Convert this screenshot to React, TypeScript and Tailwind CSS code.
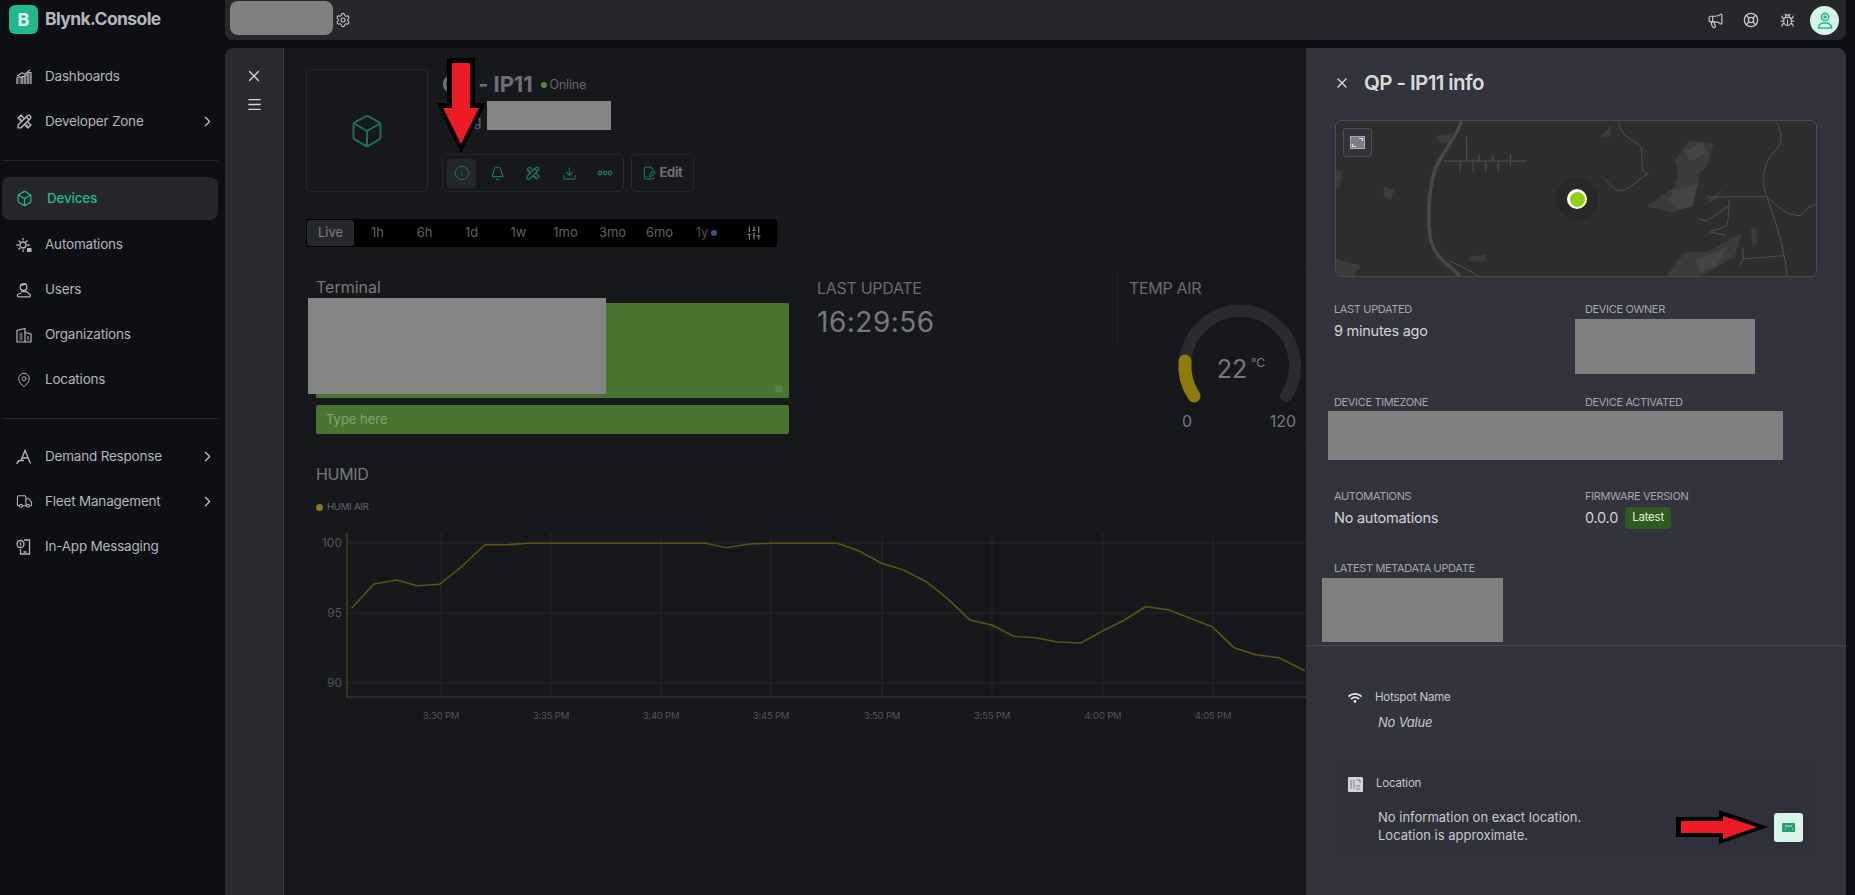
import React from "react";
import {
  Box, Bell, Download, Info, Menu, X, ChevronRight, Settings, Megaphone, LifeBuoy, Bug,
  SlidersVertical, MapPin, Truck, FilePenLine,
} from "lucide-react";
import { TbTools } from "react-icons/tb";
import { FaWifi } from "react-icons/fa";

function DashIcon() {
  return (
    <svg width="16" height="16" viewBox="0 0 16 16" fill="none" stroke="currentColor" strokeWidth="1.2">
      <path d="M1 15V9l2.500-1.500L6 9v6M6 15V7.500h3V15M9 15V6h3v9M12 15V3.500h3V15" fill="currentColor" fillOpacity=".35" />
      <path d="M1 7l5-3 3 1 5-4" />
    </svg>
  );
}
function AutoIcon() {
  return (
    <svg width="16" height="16" viewBox="0 0 16 16" fill="none" stroke="currentColor" strokeWidth="1.3">
      <circle cx="7" cy="8" r="3" />
      <path d="M7 1v2.500M7 12.500V15M0.500 8H3M11 8h2.500M2.500 3.500l1.800 1.800M11.500 3.500L9.700 5.300M2.500 12.500l1.800-1.800" />
      <rect x="11" y="11" width="4.500" height="4" fill="currentColor" stroke="none" />
    </svg>
  );
}
function UsersIcon() {
  return (
    <svg width="16" height="16" viewBox="0 0 16 16" fill="none" stroke="currentColor" strokeWidth="1.3">
      <circle cx="7.500" cy="5" r="3.300" />
      <path d="M4 3.500l6-1.500M5 9.500h5l3.500 2.500c1.500 1 1 2.800-.5 2.800H3C1 14.800.8 12.500 2.500 12l3-1" />
    </svg>
  );
}
function OrgIcon() {
  return (
    <svg width="16" height="16" viewBox="0 0 16 16" fill="none" stroke="currentColor" strokeWidth="1.2">
      <path d="M1 15V3.500L9 1.500V15M9 5.500l6 1.500v8M0.500 15h15" />
      <path d="M3.500 5.500h3v8h-3zM11 9h2v4.500h-2z" fill="currentColor" fillOpacity=".5" stroke="none" />
    </svg>
  );
}
function DemandIcon() {
  return (
    <svg width="16" height="16" viewBox="0 0 16 16" fill="none" stroke="currentColor" strokeWidth="1.3">
      <path d="M5 11.500L9 1.500l5.500 13M6.700 9h5.500M1 15c0-2 1-3 3-3.500h4" />
    </svg>
  );
}
function AppIcon() {
  return (
    <svg width="16" height="16" viewBox="0 0 16 16" fill="none" stroke="currentColor" strokeWidth="1.3">
      <path d="M8 1h5.500v14h-9V10" />
      <circle cx="4.500" cy="5" r="3.500" />
      <path d="M4.500 3.500v3M7.500 13h3" />
    </svg>
  );
}
function DotsIcon() {
  return (
    <svg width="16" height="8" viewBox="0 0 16 8" fill="none" stroke="currentColor" strokeWidth="1.400">
      <circle cx="3" cy="4" r="1.700" />
      <circle cx="8" cy="4" r="1.700" />
      <circle cx="13" cy="4" r="1.700" />
    </svg>
  );
}

function NavItem({ icon, label, arrow, className = "" }: { icon: React.ReactNode; label: string; arrow?: boolean; className?: string }) {
  return (
    <div className={`flex h-[45px] items-center pl-[16px] pr-[9px] text-[13.5px] tracking-[-0.2px] text-[#b4b5b9] ${className}`}>
      <span className="flex w-[29px] text-[#b4b5b9]">{icon}</span>
      <span className="flex-1">{label}</span>
      {arrow && <ChevronRight size={17} strokeWidth={1.6} className="text-[#c9cacc]" />}
    </div>
  );
}

function Sidebar() {
  return (
    <aside className="flex w-[225px] shrink-0 flex-col">
      <div className="flex h-[37px] items-center gap-[7px] pl-[9px] pt-[1px]">
        <div className="flex h-[29px] w-[29px] items-center justify-center rounded-[6px] bg-[#21b88a] text-[18px] font-bold text-[#e8faf3]">B</div>
        <span className="text-[17.5px] font-bold tracking-[-0.6px] text-[#b5b6ba]">Blynk.Console</span>
      </div>
      <div className="mt-[17px]">
        <NavItem icon={<DashIcon />} label="Dashboards" />
        <NavItem icon={<TbTools size={17} />} label="Developer Zone" arrow />
      </div>
      <div className="mx-[2px] mt-[16px] w-[216px] border-t border-[#26272b]" />
      <div className="mx-[2px] mt-[16px] flex h-[43px] w-[216px] items-center rounded-[8px] bg-[#26272b] pl-[14px] text-[13.5px] font-medium tracking-[-0.2px] text-[#22b98a]">
        <Box size={17} strokeWidth={1.7} className="mr-[14px]" />
        Devices
      </div>
      <div className="mt-[2px]">
        <NavItem icon={<AutoIcon />} label="Automations" />
        <NavItem icon={<UsersIcon />} label="Users" />
        <NavItem icon={<OrgIcon />} label="Organizations" />
        <NavItem icon={<MapPin size={16} strokeWidth={1.4} />} label="Locations" />
      </div>
      <div className="mx-[2px] mt-[16px] w-[216px] border-t border-[#26272b]" />
      <div className="mt-[15px]">
        <NavItem icon={<DemandIcon />} label="Demand Response" arrow />
        <NavItem icon={<Truck size={17} strokeWidth={1.5} />} label="Fleet Management" arrow />
        <NavItem icon={<AppIcon />} label="In-App Messaging" />
      </div>
    </aside>
  );
}

function TopBar() {
  return (
    <header className="flex h-[40px] shrink-0 items-center rounded-b-[8px] bg-[#26272b] pl-[5px] pr-[7px]">
      <div className="mb-[4px] h-[34px] w-[103px] rounded-[8px] bg-[#808080]" />
      <Settings size={16} strokeWidth={1.6} className="ml-[2px] text-[#c4c5c8]" />
      <div className="ml-auto flex items-center text-[#c6c7ca]">
        <Megaphone size={17} strokeWidth={1.7} />
        <LifeBuoy size={16} strokeWidth={2} className="ml-[19px]" />
        <Bug size={15} strokeWidth={1.7} className="ml-[21px]" />
        <div className="ml-[15px] flex h-[29px] w-[29px] items-center justify-center rounded-full bg-[#d9f5ea]">
          <svg width="16" height="18" viewBox="0 0 16 18" fill="none" stroke="#25b98a" strokeWidth="1.600">
            <circle cx="8" cy="6" r="3.600" />
            <circle cx="8" cy="6" r="1" fill="#25b98a" />
            <path d="M1.500 17c0-3.500 2-5 6.500-5s6.500 1.500 6.500 5z" />
          </svg>
        </div>
      </div>
    </header>
  );
}

const ranges = ["1h", "6h", "1d", "1w", "1mo", "3mo", "6mo"];

function DeviceHeader() {
  return (
    <div className="flex h-[123px] gap-[14px]">
      <div className="flex h-[123px] w-[122px] items-center justify-center rounded-[4px] border border-[#26272b] text-[#1a7259]">
        <Box size={36} strokeWidth={1.3} />
      </div>
      <div className="flex flex-col">
        <div className="flex h-[30px] items-center">
          <span className="text-[22px] font-bold leading-none tracking-[-0.1px] text-[#6f7074]">QP - IP11</span>
          <span className="ml-[8px] mt-[2px] h-[6px] w-[6px] rounded-full bg-[#568a3a]" />
          <span className="ml-[3px] mt-[2px] text-[12.5px] tracking-[-0.2px] text-[#66676b]">Online</span>
        </div>
        <span className="ml-[17px] mt-[14px] text-[13px] leading-[16px] text-[#55658f] underline">Org</span>
        <div className="mt-auto flex gap-[7px]">
          <div className="flex h-[38px] w-[182px] items-center rounded-[5px] border border-[#26272b] pl-[4px] text-[#1a7259]">
            <div className="flex h-[29px] w-[29px] items-center justify-center rounded-[4px] bg-[#26272b]">
              <Info size={16} strokeWidth={1.5} />
            </div>
            <Bell size={15} strokeWidth={1.8} className="ml-[14px]" />
            <TbTools size={16} className="ml-[20px]" />
            <Download size={15} strokeWidth={1.8} className="ml-[21px]" />
            <span className="ml-[20px]"><DotsIcon /></span>
          </div>
          <div className="flex h-[38px] w-[63px] items-center justify-center gap-[3px] rounded-[5px] border border-[#26272b]">
            <FilePenLine size={14} strokeWidth={2} className="text-[#1a7259]" />
            <span className="text-[13px] font-bold tracking-[-0.3px] text-[#6f7074]">Edit</span>
          </div>
        </div>
      </div>
    </div>
  );
}

function TimeBar() {
  return (
    <div className="mt-[27px] flex h-[28px] w-[471px] items-center rounded-[3px] bg-black px-[1px] text-[13px] text-[#5f6064]">
      <div className="flex h-[26px] w-[47px] items-center justify-center rounded-[3px] bg-[#26272b] text-[#7b7c80]">Live</div>
      {ranges.map((r) => (
        <div key={r} className="flex w-[47px] justify-center">{r}</div>
      ))}
      <div className="flex w-[47px] items-center justify-center gap-[3px] text-[#4c4d51]">
        1y
        <span className="h-[6px] w-[6px] rounded-full bg-[#2f5694]" />
      </div>
      <SlidersVertical size={16} strokeWidth={2} className="ml-[16px] text-[#74757a]" />
    </div>
  );
}

function TerminalCard() {
  return (
    <div className="h-[180px] w-[489px] shrink-0 rounded-[4px] border border-[#1b1c20] px-[7px] pt-[11px]">
      <div className="text-[16px] leading-[20px] text-[#77787c]">Terminal</div>
      <div className="relative mt-[6px] h-[95px] rounded-[1px] bg-[#4a7530]">
        <span className="absolute bottom-[5px] right-[6px] h-[8px] w-[8px] rounded-full bg-[#5a8244]" />
      </div>
      <div className="mt-[7px] flex h-[29px] items-center rounded-[2px] bg-[#4a7530] pl-[10px] text-[13px] text-[#84a074]">Type here</div>
    </div>
  );
}

function LastUpdate() {
  return (
    <div className="ml-[8px] h-[87px] w-[308px] shrink-0 rounded-[4px] border border-[#1b1c20] px-[11px] pt-[12px]">
      <div className="text-[16px] leading-[20px] tracking-[-0.3px] text-[#6a6b6f]">LAST UPDATE</div>
      <div className="mt-[7px] text-[28px] leading-[34px] tracking-[0.5px] text-[#77787c]">16:29:56</div>
    </div>
  );
}

function Gauge() {
  return (
    <div className="ml-[4px] h-[180px] w-[300px] shrink-0 rounded-[4px] border border-[#1b1c20] px-[11px] pt-[12px]">
      <div className="text-[16px] leading-[20px] tracking-[-0.3px] text-[#6a6b6f]">TEMP AIR</div>
      <svg width="180" height="132" viewBox="1129 298 180 132" className="mt-[0px]">
        <path d="M1194 396 A55 55 0 1 1 1286 396" fill="none" stroke="#2a2b2f" strokeWidth="12" strokeLinecap="round" />
        <path d="M1194 396 A55 55 0 0 1 1185 361" fill="none" stroke="#8f7a0c" strokeWidth="13" strokeLinecap="round" />
        <text x="1232" y="378" textAnchor="middle" fontSize="25" fill="#77787c">22</text>
        <text x="1258" y="367" textAnchor="middle" fontSize="12" fill="#77787c">°C</text>
        <text x="1187" y="427" textAnchor="middle" fontSize="16" fill="#77787c">0</text>
        <text x="1283" y="427" textAnchor="middle" fontSize="16" fill="#77787c">120</text>
      </svg>
    </div>
  );
}

const raw: [number, number][] = [
  [80, 475], [115, 402], [150, 390], [182, 407], [217, 403], [252, 348], [287, 284], [320, 284], [355, 280], [630, 280], [662, 293], [697, 282], [732, 280], [835, 280], [868, 303], [903, 340], [937, 360], [972, 395], [1005, 445], [1040, 510], [1074, 525], [1108, 559], [1142, 563], [1176, 576], [1212, 579], [1246, 543], [1280, 510], [1313, 470], [1348, 479], [1382, 505], [1416, 530], [1450, 593], [1484, 614], [1520, 623], [1560, 662],
];
const pts = raw.map(([x, y]) => `${(300 + x / 1.5525).toFixed(1)},${(450 + y / 3).toFixed(1)}`).join(" ");
const gridX = [441, 551, 661, 771, 882, 992, 1103, 1213, 1323];
const times = ["3:30 PM", "3:35 PM", "3:40 PM", "3:45 PM", "3:50 PM", "3:55 PM", "4:00 PM", "4:05 PM"];

function Humid() {
  return (
    <div className="ml-[2px] mt-[10px] w-[1100px] px-[8px] pt-[9px]">
      <div className="text-[16px] leading-[20px] tracking-[-0.3px] text-[#77787c]">HUMID</div>
      <div className="mt-[15px] flex h-[16px] items-center gap-[4px] text-[9.5px] tracking-[-0.2px] text-[#66676b]">
        <span className="h-[7px] w-[7px] rounded-full bg-[#8f7a0c]" />
        HUMI AIR
      </div>
      <svg width="998" height="205" viewBox="308 525 998 205" className="-ml-[8px] mt-[10px]">
        {[543, 613, 683].map((y) => (
          <line key={y} x1="346" x2="1306" y1={y} y2={y} stroke="#26272b" />
        ))}
        {gridX.map((x) => (
          <line key={x} x1={x} x2={x} y1="533" y2="697" stroke="#26272b" />
        ))}
        <line x1="346" x2="1306" y1="697" y2="697" stroke="#3a3b3e" />
        <line x1="347" x2="347" y1="533" y2="697" stroke="#5c5217" />
        <polyline points={pts} fill="none" stroke="#5c5217" strokeWidth="1.600" />
        {[["100", 547], ["95", 617], ["90", 687]].map(([t, y]) => (
          <text key={t} x="342" y={y} textAnchor="end" fontSize="12" fill="#55565a">{t}</text>
        ))}
        {times.map((t, i) => (
          <text key={t} x={gridX[i]} y="719" textAnchor="middle" fontSize="9.500" letterSpacing="-0.2" fill="#55565a">{t}</text>
        ))}
      </svg>
    </div>
  );
}

function MapBox() {
  const patch = "#3b3b3b";
  const patch2 = "#454545";
  return (
    <div className="relative h-[157px] w-[482px] overflow-hidden rounded-[6px] border border-[#494a52] bg-[#2e2e2e]">
      <svg className="absolute inset-0 h-full w-full" viewBox="100 240 1360 472" preserveAspectRatio="none">
        <g fill={patch}>
          <path d="M1060 360 L1100 300 L1170 310 L1150 380 L1130 400 L1120 470 L1060 520 L980 500 L1020 470 L1060 440 L1070 400Z" />
          <path d="M1040 700 L1090 640 L1150 640 L1200 610 L1250 580 L1230 650 L1160 700 L1130 712 L1040 712Z" />
          <path d="M1275 570 L1290 565 L1295 610 L1280 620Z" />
          <path d="M235 440 L265 450 L255 480 L235 470Z" />
          <path d="M385 285 L430 278 L420 305 L390 305Z" />
          <path d="M100 660 L170 680 L150 712 L100 712Z" />
          <path d="M100 390 L120 395 L110 440 L100 445Z" />
          <path d="M850 290 L880 250 L875 290Z" />
          <path d="M1160 475 L1200 445 L1175 480 L1155 490Z" />
          <path d="M475 655 L525 645 L525 665 L480 668Z" />
        </g>
        <g fill={patch2}>
          <path d="M1090 330 L1140 305 L1150 335 L1100 365Z" />
          <path d="M1060 450 L1125 430 L1110 500 L1070 510 L1040 480Z" />
          <path d="M1120 660 L1180 640 L1210 620 L1180 680 L1130 700Z" />
        </g>
        <g fill="none" stroke="#4a4a4a" vectorEffect="non-scaling-stroke">
          <path d="M455 240 C445 290 400 330 380 390 C365 440 355 540 370 610 C385 660 425 680 450 712" strokeWidth="3.500" stroke="#484848" vectorEffect="non-scaling-stroke" />
          <g strokeWidth="1" stroke="#505050">
            <path vectorEffect="non-scaling-stroke" d="M405 362 H640 M470 288 V362 M452 362 V395 M488 362 V395 M524 362 V395 M560 362 V395 M506 342 V362 M545 342 V362 M595 340 V380" />
            <path vectorEffect="non-scaling-stroke" d="M900 245 C905 290 950 300 965 320 C970 360 960 400 985 400 C950 420 930 455 900 452 C885 450 870 425 860 415" />
            <path vectorEffect="non-scaling-stroke" d="M1350 245 C1370 290 1360 320 1340 335 C1310 370 1305 420 1320 470 C1340 530 1370 620 1378 712" />
            <path vectorEffect="non-scaling-stroke" d="M1150 472 L1320 470 C1350 500 1380 530 1415 528 C1430 510 1440 500 1460 495" />
            <path vectorEffect="non-scaling-stroke" d="M1215 478 C1210 510 1215 540 1205 560 C1190 570 1170 570 1160 578 L1205 588 M1210 500 L1150 545 L1128 538" />
            <path vectorEffect="non-scaling-stroke" d="M1253 625 L1253 660 L1242 685 M1253 660 L1370 650 M420 665 C450 680 480 695 500 712" />
          </g>
        </g>
      </svg>
      <div className="absolute left-[7px] top-[7px] flex h-[29px] w-[29px] items-center justify-center rounded-[3px] border border-[#4c4d57] bg-[#32333d]">
        <svg width="15" height="13" viewBox="0 0 15 13" fill="none">
          <rect x="0.500" y="0.500" width="14" height="12" fill="#7c7d84" stroke="#aaabb0" />
          <path d="M9 2.500h3.500V5M6 10.500H2.500V8" stroke="#e0e0e2" strokeWidth="1.200" />
        </svg>
      </div>
      <div className="absolute left-[220px] top-[57px] flex h-[42px] w-[42px] items-center justify-center rounded-full bg-[#282828]">
        <div className="flex h-[20px] w-[20px] items-center justify-center rounded-full bg-white">
          <div className="h-[15px] w-[15px] rounded-full bg-[#8fd014]" />
        </div>
      </div>
    </div>
  );
}

function Field({ label, value, badge }: { label: string; value?: string; badge?: boolean }) {
  return (
    <div>
      <div className="text-[11px] leading-[14px] tracking-[-0.35px] text-[#a4a5ac]">{label}</div>
      {value && (
        <div className="mt-[5px] flex h-[20px] items-center text-[14.5px] tracking-[-0.25px] text-[#d2d2d6]">
          {value}
          {badge && (
            <span className="ml-[7px] flex h-[22px] w-[46px] items-center justify-center rounded-[3px] bg-[#2f5a1f] text-[11.5px] text-[#e2f3d4]">Latest</span>
          )}
        </div>
      )}
    </div>
  );
}

function Drawer() {
  return (
    <section className="relative w-[540px] shrink-0 rounded-tr-[8px] bg-[#32333d]">
      <div className="px-[29px] pt-[22px]">
        <div className="flex h-[26px] items-center">
          <X size={16} strokeWidth={1.8} className="-ml-[1px] text-[#dcdcde]" />
          <span className="ml-[14px] text-[20.5px] font-semibold tracking-[-0.6px] text-[#d9d9dc]">QP - IP11 info</span>
        </div>
        <div className="mt-[24px]"><MapBox /></div>
        <div className="-ml-px mt-[25px] grid grid-cols-[251px_1fr] grid-rows-[93px_94px_72px_84px]">
          <Field label="LAST UPDATED" value="9 minutes ago" />
          <Field label="DEVICE OWNER" />
          <Field label="DEVICE TIMEZONE" />
          <Field label="DEVICE ACTIVATED" />
          <Field label="AUTOMATIONS" value="No automations" />
          <Field label="FIRMWARE VERSION" value="0.0.0" badge />
          <Field label="LATEST METADATA UPDATE" />
        </div>
      </div>
      <div className="border-t border-[#45464f] px-[29px] pt-[44px]">
        <div className="flex h-[16px] items-center pl-[13px] text-[11.5px] tracking-[-0.2px] text-[#c6c7cb]">
          <FaWifi size={14} className="mr-[13px] text-[#e4e4e6]" />
          Hotspot Name
        </div>
        <div className="mt-[7px] pl-[43px] text-[13px] italic leading-[18px] tracking-[-0.2px] text-[#c9c9cd]">No Value</div>
        <div className="mt-[29px] flex h-[96px] justify-between rounded-[4px] bg-[#2f3039] pb-[14px] pl-[13px] pr-[14px] pt-[16px]">
          <div>
            <div className="flex h-[16px] items-center text-[11.5px] tracking-[-0.2px] text-[#c6c7cb]">
              <svg width="15" height="15" viewBox="0 0 15 15" className="mr-[13px]">
                <rect width="15" height="15" rx="1" fill="#d4d4d8" />
                <path d="M3 3v9M6 3v9M9 3h3v3M8 9h4M8 12h4" stroke="#7d7e86" strokeWidth="1" fill="none" />
              </svg>
              Location
            </div>
            <div className="ml-[30px] mt-[16px] text-[13px] leading-[18px] text-[#c9c9cd]">
              No information on exact location.
              <br />
              Location is approximate.
            </div>
          </div>
          <div className="flex h-[29px] w-[29px] items-center justify-center self-end rounded-[3px] bg-[#d9f5ea]">
            <svg width="13" height="9" viewBox="0 0 13 9">
              <rect width="13" height="9" rx="1" fill="#2a9d78" />
              <path d="M3 3h7M3 6h1M10 6h1" stroke="#bfeedd" strokeWidth="1" />
            </svg>
          </div>
        </div>
      </div>
      <div className="absolute left-[269px] top-[271px] h-[55px] w-[180px] bg-[#808080]" />
      <div className="absolute left-[22px] top-[363px] h-[49px] w-[455px] bg-[#808080]" />
      <div className="absolute left-[16px] top-[530px] h-[64px] w-[181px] bg-[#808080]" />
    </section>
  );
}

export default function App() {
  return (
    <div className="relative flex h-[895px] w-[1855px] overflow-hidden bg-[#0d0f14] font-[family-name:Inter,sans-serif]">
      <Sidebar />
      <main className="flex w-[1621px] flex-col">
        <TopBar />
        <div className="mt-[8px] flex min-h-0 flex-1 overflow-hidden rounded-t-[8px]">
          <div className="flex w-[59px] shrink-0 flex-col items-center border-r border-[#3c3d42] bg-[#2a2b30] pt-[19px] text-[#d8d8da]">
            <X size={18} strokeWidth={1.8} />
            <Menu size={17} strokeWidth={1.8} className="mt-[11px]" />
          </div>
          <div className="w-[1022px] shrink-0 overflow-hidden bg-[#17181c] pl-[22px] pt-[21px]">
            <DeviceHeader />
            <TimeBar />
            <div className="ml-[2px] mt-[18px] flex">
              <TerminalCard />
              <LastUpdate />
              <Gauge />
            </div>
            <Humid />
          </div>
          <Drawer />
        </div>
      </main>

      <div className="absolute left-[230px] top-[48px] hidden" />
      <div className="absolute left-[308px] top-[298px] h-[96px] w-[298px] bg-[#858585]" />
      <div className="absolute left-[487px] top-[101px] h-[29px] w-[124px] bg-[#858585]" />
      <svg className="absolute left-[430px] top-[50px]" width="64" height="110" viewBox="430 50 64 110">
        <polygon points="447,58 475,58 475,103 486,103 461,153 437,103 447,103" fill="#000" />
        <polygon points="452,63 470,63 470,108 479,108 461,144 443,108 452,108" fill="#ed1c24" />
      </svg>
      <svg className="absolute left-[1670px] top-[805px]" width="104" height="44" viewBox="1670 805 104 44">
        <polygon points="1676,817 1719,817 1719,810 1768,827 1719,844 1719,837 1676,837" fill="#000" />
        <polygon points="1681,821 1723,821 1723,816 1757,827 1723,839 1723,833 1681,833" fill="#ed1c24" />
      </svg>
    </div>
  );
}
